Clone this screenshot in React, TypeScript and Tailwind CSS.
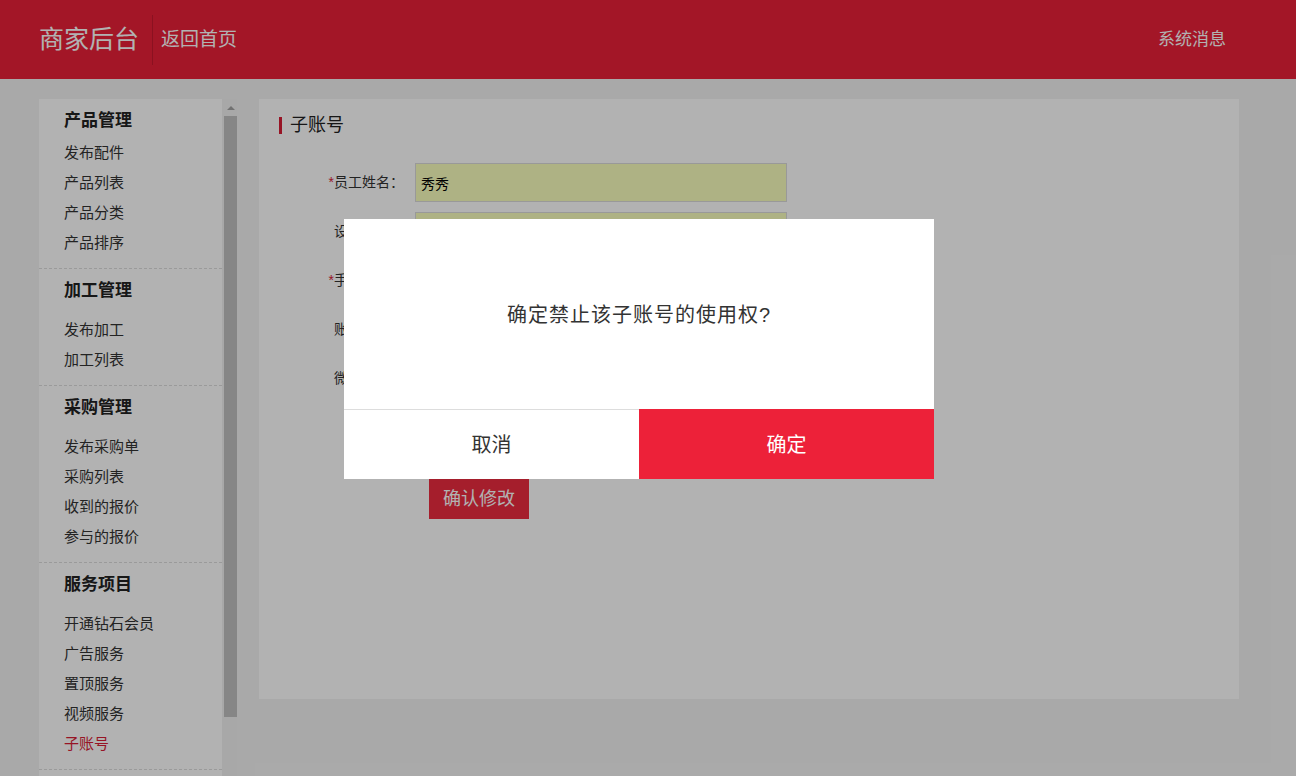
import React from 'react';

type Group = { title: string; items: string[]; first?: boolean };

const groups: Group[] = [
  { title: '产品管理', items: ['发布配件', '产品列表', '产品分类', '产品排序'], first: true },
  { title: '加工管理', items: ['发布加工', '加工列表'] },
  { title: '采购管理', items: ['发布采购单', '采购列表', '收到的报价', '参与的报价'] },
  { title: '服务项目', items: ['开通钻石会员', '广告服务', '置顶服务', '视频服务', '子账号'] },
];

const fields = [
  { label: '员工姓名：', required: true, value: '秀秀', filled: true },
  { label: '设置密码：', required: false, value: '', filled: true },
  { label: '手机号码：', required: true, value: '', filled: false },
  { label: '账号权限：', required: false, value: '', filled: false },
  { label: '微信号码：', required: false, value: '', filled: false },
];

const Sidebar: React.FC = () => (
  <div className="flex h-[720px]">
    <div className="w-[183px] bg-white">
      {groups.map(g => (
        <div key={g.title} className="border-b border-dashed border-[#dddddd] px-[25px] pb-[10px] pt-[10px]">
          <h3 className={`text-[17px] font-bold leading-[24px] text-[#222] ${g.first ? 'mb-[5px]' : 'mb-[12px]'}`}>
            {g.title}
          </h3>
          {g.items.map(item => (
            <div
              key={item}
              className={`flex h-[30px] items-center text-[15px] ${item === '子账号' ? 'text-[#d81e35]' : 'text-[#333]'}`}
            >
              {item}
            </div>
          ))}
        </div>
      ))}
    </div>
    {/* scrollbar */}
    <div className="flex w-[15px] flex-col bg-[#f1f1f1]">
      <div className="flex h-[17px] items-center justify-center pl-[2px]">
        <div className="h-0 w-0 border-x-[4px] border-b-[4px] border-x-transparent border-b-[#a3a3a3]" />
      </div>
      <div className="ml-[2px] h-[601px] w-[13px] bg-[#c1c1c1]" />
    </div>
  </div>
);

const App: React.FC = () => {
  return (
    <div className="relative h-screen overflow-hidden bg-[#f3f3f3] font-['Liberation_Sans','Noto_Sans_CJK_SC',sans-serif]">
      <header className="flex h-[79px] items-center bg-[#ea2039] pl-[39px] pr-[70px] text-white">
        <span className="text-[25px] leading-none">商家后台</span>
        <div className="ml-[13px] h-[50px] w-px bg-[#c8192e]" />
        <span className="ml-[8px] text-[19px] leading-none">返回首页</span>
        <span className="ml-auto text-[17px] leading-none">系统消息</span>
      </header>

      <div className="flex gap-[22px] pl-[39px] pt-[20px]">
        <Sidebar />

        <div className="h-[600px] w-[980px] bg-white px-[20px] pt-[18px]">
          <div className="flex items-center">
            <div className="h-[17px] w-[3px] bg-[#d81e35]" />
            <span className="ml-[8px] text-[18px] leading-[17px] text-[#222]">子账号</span>
          </div>

          <div className="mt-[29px]">
            {fields.map(f => (
              <div key={f.label} className="mb-[10px] flex h-[39px] items-center">
                <label className="w-[125px] text-right text-[14px] text-[#333]">
                  {f.required && <span className="text-[#d81e35]">*</span>}
                  {f.label}
                </label>
                <input
                  readOnly
                  defaultValue={f.value}
                  className={`ml-[11px] h-[39px] w-[372px] border border-[#dcdcdc] px-[5px] text-[14px] text-black outline-none ${f.filled ? 'bg-[#faffbd]' : 'bg-white'}`}
                />
              </div>
            ))}
            <button className="ml-[150px] mt-[71px] h-[40px] w-[100px] bg-[#ec2b40] text-[18px] text-white">
              确认修改
            </button>
          </div>
        </div>
      </div>

      {/* mask */}
      <div className="absolute inset-0 bg-black/30" />

      {/* confirm dialog */}
      <div className="absolute left-[344px] top-[219px] w-[590px] bg-white">
        <div className="flex h-[190px] items-center justify-center pt-[2px] text-[20px] tracking-[1px] text-[#333]">
          确定禁止该子账号的使用权?
        </div>
        <div className="grid h-[70px] grid-cols-2 border-t border-[#dddddd]">
          <button className="pt-[1px] text-[20px] text-[#333]">取消</button>
          <button className="-mt-px bg-[#ed2139] pt-[1px] text-[20px] text-white">确定</button>
        </div>
      </div>
    </div>
  );
};

export default App;
